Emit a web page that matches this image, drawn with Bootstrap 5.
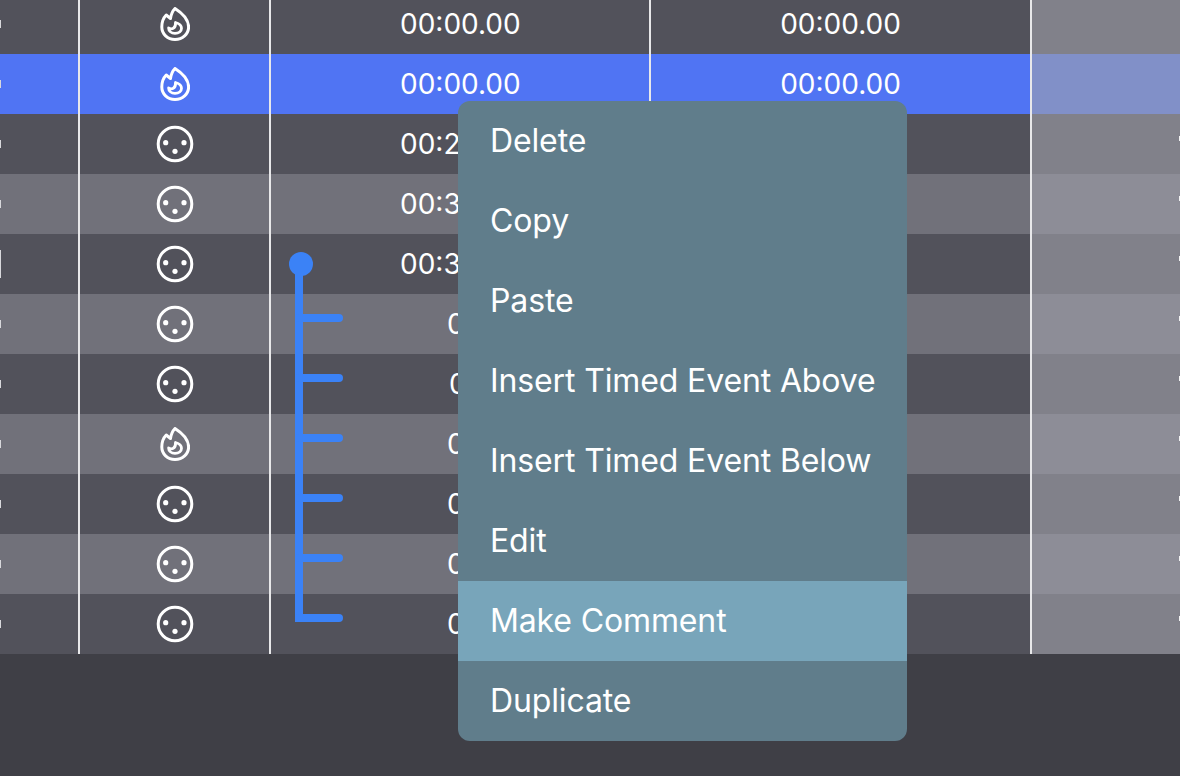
<!DOCTYPE html>
<html lang="en">
<head>
<meta charset="utf-8">
<title>Timed events</title>
<link href="https://cdn.jsdelivr.net/npm/bootstrap@5.3.0/dist/css/bootstrap.min.css" rel="stylesheet">
<style>
html, body { height: 100%; }
body { background: #3f3f46; font-family: Inter, "Liberation Sans", sans-serif; color: #fff; overflow: hidden; }
.stage { height: 776px; overflow: hidden; }
.ev-table { margin-top: -6px; }
.ev-row { height: 60px; background: #52525b; }
.ev-row.alt { background: #71717a; }
.ev-row.sel { background: #5074f3; }
.ev-cell { height: 100%; border-right: 2px solid #e8e8ea; font-size: 28px; line-height: 1; }
.c-a { width: 80px; }
.c-b { width: 191px; }
.c-c { width: 380px; padding-left: 129px; }
.c-c.nested { padding-left: 176px; }
.c-c.nested-wide { padding-left: 178px; }
.c-d { width: 381px; }
.c-e { width: 148px; background: #81818a; border-right: 0; }
.ev-row.alt .c-e { background: #8d8d97; }
.ev-row.sel .c-e { background: #8190c8; }
.lead-mark { width: 1px; height: 8px; background: #d8d8dc; }
.lead-mark.tall { height: 28px; }
.tail-mark { width: 1px; height: 5px; margin-bottom: 12px; background: #f4f4f5; }
.ico-flame { width: 30px; height: 34px; }
.ico-xlr { width: 38px; height: 38px; }
.ctx-menu { position: absolute; left: 458px; top: 101px; width: 449px; border-radius: 12px; overflow: hidden; background: #607d8b; z-index: 5; }
.ctx-item { height: 80px; padding-left: 32px; font-size: 32px; letter-spacing: -.13px; color: #fff; }
.ctx-item.hot { background: #78a5ba; }
.tree { position: absolute; left: 288px; top: 252px; z-index: 4; }
</style>
</head>
<body>
<svg width="0" height="0" class="position-absolute">
  <defs>
    <symbol id="flame" viewBox="0 0 30 34">
      <path d="M15 1.5C20.5 5 28.6 11 28.6 20C28.6 27 22.5 32.5 15 32.5C7.5 32.5 1.8 27 1.8 20C1.8 15 3.3 11 6.2 8L10.5 11.5C11 8 12.5 4 15 1.5Z" fill="none" stroke="#fff" stroke-width="3" stroke-linejoin="round"/>
      <path d="M15.5 15.5C19 16.5 21.5 18.5 21.5 21.2C21.5 24.2 18.8 26.3 15 26.3C11.2 26.3 8.6 24 8.6 21C11.5 22.6 16 22 15.5 15.5Z" fill="none" stroke="#fff" stroke-width="2.8" stroke-linejoin="round"/>
    </symbol>
    <symbol id="xlr" viewBox="0 0 38 38">
      <circle cx="19" cy="19" r="16.8" fill="none" stroke="#fff" stroke-width="3"/>
      <circle cx="9.7" cy="17.7" r="2.6" fill="#fff"/>
      <circle cx="28" cy="17.7" r="2.6" fill="#fff"/>
      <circle cx="19" cy="26.3" r="2.6" fill="#fff"/>
    </symbol>
  </defs>
</svg>
<div class="stage position-relative">
  <div class="ev-table" id="rows"></div>

  <svg class="tree" width="56" height="372" viewBox="0 0 56 372">
    <circle cx="13" cy="12" r="12" fill="#3b82f6"/>
    <path d="M11 12V370" fill="none" stroke="#3b82f6" stroke-width="8"/>
    <g fill="none" stroke="#3b82f6" stroke-width="8" stroke-linecap="round">
      <path d="M11 66H51"/><path d="M11 126H51"/><path d="M11 186H51"/><path d="M11 246H51"/><path d="M11 306H51"/><path d="M11 366H51"/>
    </g>
  </svg>

  <div class="ctx-menu">
    <div class="ctx-item d-flex align-items-center">Delete</div>
    <div class="ctx-item d-flex align-items-center">Copy</div>
    <div class="ctx-item d-flex align-items-center">Paste</div>
    <div class="ctx-item d-flex align-items-center">Insert Timed Event Above</div>
    <div class="ctx-item d-flex align-items-center">Insert Timed Event Below</div>
    <div class="ctx-item d-flex align-items-center">Edit</div>
    <div class="ctx-item hot d-flex align-items-center">Make Comment</div>
    <div class="ctx-item d-flex align-items-center">Duplicate</div>
  </div>
</div>
<script>
var rows = [
  ['', 'flame', '00:00.00', '', '00:00.00', 0],
  ['sel', 'flame', '00:00.00', '', '00:00.00', 0],
  ['', 'xlr', '00:2', '', '', 1],
  ['alt', 'xlr', '00:3', '', '', 1],
  ['', 'xlr', '00:3', '', '', 1],
  ['alt', 'xlr', '0', 'nested', '', 1],
  ['', 'xlr', '0', 'nested-wide', '', 1],
  ['alt', 'flame', '0', 'nested', '', 1],
  ['', 'xlr', '0', 'nested', '', 1],
  ['alt', 'xlr', '0', 'nested', '', 1],
  ['', 'xlr', '0', 'nested', '', 1]
];
var html = '';
rows.forEach(function (r, i) {
  var icon = r[1] === 'flame'
    ? '<svg class="ico-flame"><use href="#flame"/></svg>'
    : '<svg class="ico-xlr"><use href="#xlr"/></svg>';
  html += '<div class="ev-row d-flex ' + r[0] + '">' +
    '<div class="ev-cell c-a d-flex align-items-center"><span class="lead-mark ' + (i === 4 ? 'tall' : '') + '"></span></div>' +
    '<div class="ev-cell c-b d-flex align-items-center justify-content-center">' + icon + '</div>' +
    '<div class="ev-cell c-c d-flex align-items-center ' + r[3] + '">' + r[2] + '</div>' +
    '<div class="ev-cell c-d d-flex align-items-center justify-content-center">' + r[4] + '</div>' +
    '<div class="ev-cell c-e d-flex align-items-center justify-content-end">' + (r[5] ? '<span class="tail-mark"></span>' : '') + '</div>' +
    '</div>';
});
document.getElementById('rows').innerHTML = html;
</script>
<script src="https://cdn.jsdelivr.net/npm/bootstrap@5.3.0/dist/js/bootstrap.bundle.min.js"></script>
</body>
</html>
